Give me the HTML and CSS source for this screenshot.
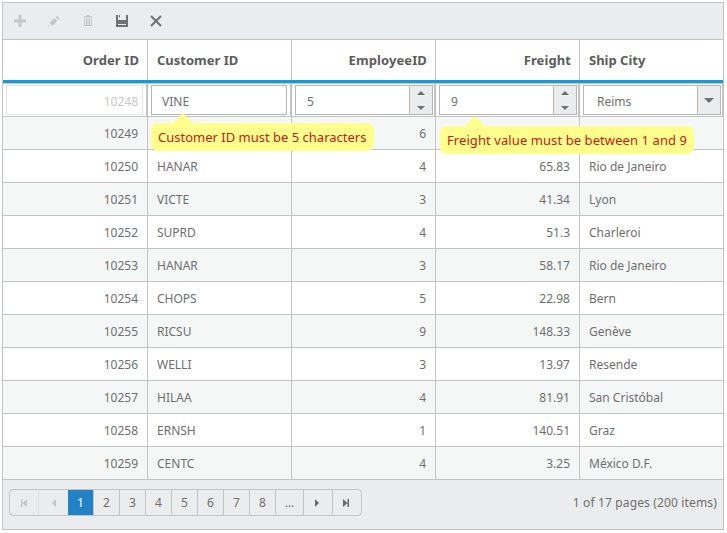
FILE: index.html
```html
<!DOCTYPE html>
<html lang="en">
<head>
<meta charset="utf-8">
<title>Orders</title>
<link rel="stylesheet" href="styles.css">
</head>
<body>
<div class="grid">
  <div class="toolbar">
    <svg class="tool off" viewBox="0 0 14 14"><path d="M5.500 1h3v4.500H13v3H8.500V13h-3V8.500H1v-3h4.500z"/></svg>
    <svg class="tool off" viewBox="0 0 14 14"><path d="M1.500 12.500v-2l2 2zM3 8.500l4.200-4.200 3 3L6 11.300H4.500L3 10zM8.500 3l1.200-1.200 3 3L11.500 6z"/></svg>
    <svg class="tool off" viewBox="0 0 14 14"><path d="M3 2h2.500V1h3v1H11v1.500H3zM3 4.500h8V12H3zM4 5.500V11h1V5.500zm2.500 0V11h1V5.500zm2.500 0V11h1V5.500z" fill-rule="evenodd"/></svg>
    <svg class="tool" viewBox="0 0 14 14"><path d="M1 1h2v5h8V1h2v12H1zM3 10v1h8v-1zM4 1h1v2.500H4z" fill-rule="evenodd"/></svg>
    <svg class="tool" viewBox="0 0 14 14"><path d="M2 2l10 10M12 2L2 12" stroke="#707070" stroke-width="2"/></svg>
  </div>
  <div class="row head">
    <div class="cell num">Order ID</div><div class="cell">Customer ID</div><div class="cell num">EmployeeID</div><div class="cell num">Freight</div><div class="cell">Ship City</div>
  </div>
  <div class="row edit">
    <div class="slot"><div class="field disabled">10248</div></div>
    <div class="slot"><div class="field">VINE</div><div class="tip tip-customer"><span>Customer ID must be 5 characters</span></div></div>
    <div class="slot"><div class="field">5<div class="spin"><i class="up"></i><i class="down"></i></div></div></div>
    <div class="slot"><div class="field">9<div class="spin"><i class="up"></i><i class="down"></i></div></div><div class="tip tip-freight"><span>Freight value must be between 1 and 9</span></div></div>
    <div class="slot"><div class="field city">Reims<div class="spin drop"><i class="down"></i></div></div></div>
  </div>
  <div class="row alt"><div class="cell num">10249</div><div class="cell"></div><div class="cell num">6</div><div class="cell num"></div><div class="cell"></div></div>
  <div class="row"><div class="cell num">10250</div><div class="cell">HANAR</div><div class="cell num">4</div><div class="cell num">65.83</div><div class="cell">Rio de Janeiro</div></div>
  <div class="row alt"><div class="cell num">10251</div><div class="cell">VICTE</div><div class="cell num">3</div><div class="cell num">41.34</div><div class="cell">Lyon</div></div>
  <div class="row"><div class="cell num">10252</div><div class="cell">SUPRD</div><div class="cell num">4</div><div class="cell num">51.3</div><div class="cell">Charleroi</div></div>
  <div class="row alt"><div class="cell num">10253</div><div class="cell">HANAR</div><div class="cell num">3</div><div class="cell num">58.17</div><div class="cell">Rio de Janeiro</div></div>
  <div class="row"><div class="cell num">10254</div><div class="cell">CHOPS</div><div class="cell num">5</div><div class="cell num">22.98</div><div class="cell">Bern</div></div>
  <div class="row alt"><div class="cell num">10255</div><div class="cell">RICSU</div><div class="cell num">9</div><div class="cell num">148.33</div><div class="cell">Genève</div></div>
  <div class="row"><div class="cell num">10256</div><div class="cell">WELLI</div><div class="cell num">3</div><div class="cell num">13.97</div><div class="cell">Resende</div></div>
  <div class="row alt"><div class="cell num">10257</div><div class="cell">HILAA</div><div class="cell num">4</div><div class="cell num">81.91</div><div class="cell">San Cristóbal</div></div>
  <div class="row"><div class="cell num">10258</div><div class="cell">ERNSH</div><div class="cell num">1</div><div class="cell num">140.51</div><div class="cell">Graz</div></div>
  <div class="row alt"><div class="cell num">10259</div><div class="cell">CENTC</div><div class="cell num">4</div><div class="cell num">3.25</div><div class="cell">México D.F.</div></div>
  <div class="footer">
    <div class="pager">
      <span class="nav dim"><svg viewBox="0 0 8 8"><path d="M1 0h1.500v8H1zM7 0v8L2.500 4z"/></svg></span>
      <span class="nav dim last"><svg viewBox="0 0 8 8"><path d="M6 0v8L2 4z"/></svg></span>
      <span class="current">1</span><span>2</span><span>3</span><span>4</span><span>5</span><span>6</span><span>7</span><span>8</span><span class="more">...</span>
      <span class="nav fwd"><svg viewBox="0 0 8 8"><path d="M2 0v8l4-4z"/></svg></span>
      <span class="nav fwd"><svg viewBox="0 0 8 8"><path d="M1 0v8l4.500-4zM5.500 0H7v8H5.500z"/></svg></span>
    </div>
    <div class="summary">1 of 17 pages (200 items)</div>
  </div>
</div>
</body>
</html>
```

FILE: styles.css
```css
* { box-sizing: border-box; }
body { margin: 0; padding: 2px; background: #fff; font: 12px/16px "Noto Sans", "Open Sans", sans-serif; color: #6e6e6e; }
.grid { width: 722px; height: 528px; border: 1px solid #c1c3c4; background: #fff; }
.toolbar { height: 37px; display: flex; align-items: center; gap: 20px; padding-left: 10px; background: #ebeced; border-bottom: 1px solid #c1c3c4; }
.tool { width: 14px; height: 14px; fill: #707070; }
.off { fill: #c5c6c7; }
.row { display: grid; grid-template-columns: 145px 144px 144px 144px 143px; height: 33px; border-bottom: 1px solid #c1c3c4; }
.alt { background: #f5f7f7; }
.cell { display: flex; align-items: center; padding: 1px 9px 0; border-right: 1px solid #c1c3c4; white-space: nowrap; }
.cell:last-child { border-right: 0; }
.num { justify-content: flex-end; }
.head { height: 43px; border-bottom: 3px solid #179bd7; color: #5c5c5c; font-weight: 700; font-size: 13px; }
.head .cell { padding-top: 0; }
.head .num { padding-right: 8px; letter-spacing: 0.100px; }
.edit { height: 34px; border-top: 1px solid #c1c3c4; }
.slot { position: relative; padding: 1px 1px 1px 3px; border-right: 2px solid #c1c3c4; }
.slot:last-child { border-right-width: 1px; }
.field { display: flex; align-items: center; justify-content: space-between; height: 30px; border: 1px solid #b5b7b8; padding: 3px 0 0 11px; }
.slot:nth-child(2) .field { width: 136px; padding-left: 10px; }
.disabled { width: 137px; border-color: #e3e4e4; color: #c9c9c9; justify-content: flex-end; padding-right: 4px; }
.city { padding-left: 13px; }
.spin { width: 23px; height: 28px; margin-top: -3px; background: #ebeced; border-left: 1px solid #b5b7b8; display: flex; flex-direction: column; align-items: center; justify-content: center; gap: 11px; }
.up, .down { border: 4px solid transparent; border-top-width: 0; border-bottom: 4px solid #717171; }
.down { border-bottom-width: 0; border-top: 4px solid #717171; }
.drop .down { border-width: 5px 5px 0; }
.tip { position: absolute; z-index: 1; display: flex; align-items: center; height: 28px; border-radius: 7px; padding: 0 6px 0 7px; background: #ffff8d; color: #c81818; font-size: 13px; white-space: nowrap; }
.tip::before { content: ""; position: absolute; bottom: 100%; border: 10px solid transparent; border-top: 0; border-bottom-color: #ffff8d; }
.tip-customer { left: 3px; top: 39px; width: 223px; }
.tip-customer::before { left: 22px; }
.tip-freight { left: 4px; top: 42px; width: 254px; letter-spacing: 0.080px; }
.tip-freight::before { left: 25px; }
.footer { height: 49px; display: flex; justify-content: space-between; align-items: flex-start; padding: 9px 6px 0; background: #ebeced; }
.pager { display: flex; height: 27px; border: 1px solid #c1c3c4; border-radius: 4px; overflow: hidden; }
.pager span { width: 26px; display: flex; align-items: center; justify-content: center; border-right: 1px solid #c1c3c4; }
.pager .nav { width: 29px; }
.pager .dim { border-right-color: #dddfe0; }
.pager .last { border-right: 0; }
.pager .more { width: 28px; }
.pager .nav:last-child { width: 28px; border-right: 0; }
.pager .fwd { padding-right: 3px; }
.pager .current { background: #2382c5; color: #fff; }
.nav svg { width: 8px; height: 8px; fill: #686868; }
.dim svg { fill: #c5c6c7; }
.summary { margin-top: 6px; letter-spacing: 0.150px; white-space: nowrap; }
```
